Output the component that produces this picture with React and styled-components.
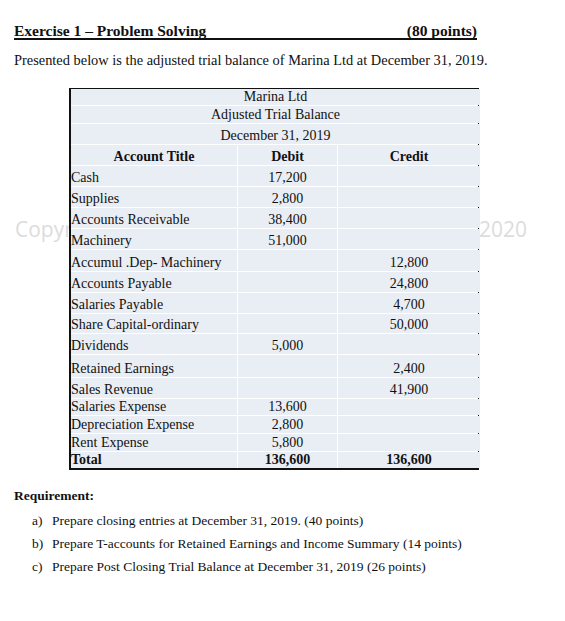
import React from "react";
import styled, { createGlobalStyle } from "styled-components";

const Global = createGlobalStyle`
  html, body {
    margin: 0;
    background: #ffffff;
  }
  body {
    font-family: "Liberation Serif", "DejaVu Serif", serif;
    color: #111;
  }
`;

const Page = styled.div`
  width: 565px;
  height: 621px;
  padding: 23px 0 0 14px;
  box-sizing: border-box;
`;

const Heading = styled.div`
  display: flex;
  justify-content: space-between;
  width: 463px;
  font-size: 15.5px;
  font-weight: bold;
  line-height: 15px;
  border-bottom: 2px solid #111;
`;

const Intro = styled.p`
  margin: 11px 0 0;
  font-size: 14.4px;
  line-height: 18px;
`;

const TableArea = styled.div`
  position: relative;
  margin: 19px 0 0 55px;
  width: 410px;
`;

const Watermark = styled.div`
  position: absolute;
  left: -54px;
  right: -48px;
  top: 127px;
  display: flex;
  justify-content: space-between;
  font-family: "Open Sans", "Liberation Sans", sans-serif;
  font-size: 21px;
  color: #dcdcdc;
  z-index: 0;
`;

const Grid = styled.div`
  position: relative;
  z-index: 1;
  display: grid;
  grid-template-columns: 166px 99px 142px;
  column-gap: 1px;
  row-gap: 1px;
  background: #ffffff;
  border: 1px solid #111;
  border-left-width: 2px;
  border-bottom-width: 2px;
  font-size: 14px;
`;

const Cell = styled.div`
  background: #e9edf4;
  height: ${(p) => p.h}px;
  display: flex;
  align-items: flex-end;
  justify-content: ${(p) => (p.left ? "flex-start" : "center")};
  padding-bottom: 1px;
  box-sizing: border-box;
  line-height: 14px;
  font-weight: ${(p) => (p.bold ? "bold" : "normal")};
  grid-column: ${(p) => (p.span ? "1 / span 3" : "auto")};
  white-space: nowrap;
`;

const ReqTitle = styled.div`
  margin-top: 18px;
  font-size: 13.5px;
  font-weight: bold;
`;

const ReqList = styled.div`
  margin-top: 8px;
  padding-left: 18px;
  display: flex;
  flex-direction: column;
  gap: 5px;
`;

const ReqItem = styled.div`
  display: flex;
  font-size: 13.5px;
  line-height: 18px;
`;

const ReqMark = styled.span`
  width: 20px;
`;

const titles = [
  ["Marina Ltd", 16],
  ["Adjusted Trial Balance", 17],
  ["December 31, 2019", 20],
];

const rows = [
  ["Cash", "17,200", "", 20],
  ["Supplies", "2,800", "", 20],
  ["Accounts Receivable", "38,400", "", 20],
  ["Machinery", "51,000", "", 20],
  ["Accumul .Dep- Machinery", "", "12,800", 21],
  ["Accounts Payable", "", "24,800", 20],
  ["Salaries Payable", "", "4,700", 20],
  ["Share Capital-ordinary", "", "50,000", 19],
  ["Dividends", "5,000", "", 20],
  ["Retained Earnings", "", "2,400", 22],
  ["Sales Revenue", "", "41,900", 20],
  ["Salaries Expense", "13,600", "", 16],
  ["Depreciation Expense", "2,800", "", 17],
  ["Rent Expense", "5,800", "", 17],
];

const reqs = [
  ["a)", "Prepare closing entries at December 31, 2019. (40 points)"],
  ["b)", "Prepare T-accounts for Retained Earnings and Income Summary (14 points)"],
  ["c)", "Prepare Post Closing Trial Balance at December 31, 2019 (26 points)"],
];

export default function App() {
  return (
    <Page>
      <Global />
      <Heading>
        <span>Exercise 1 – Problem Solving</span>
        <span>(80 points)</span>
      </Heading>
      <Intro>
        Presented below is the adjusted trial balance of Marina Ltd at December 31, 2019.
      </Intro>
      <TableArea>
        <Watermark>
          <span>Copyright</span>
          <span>2020</span>
        </Watermark>
        <Grid>
          {titles.map(([t, h]) => (
            <Cell key={t} span h={h}>
              {t}
            </Cell>
          ))}
          <Cell bold h={20}>Account Title</Cell>
          <Cell bold h={20}>Debit</Cell>
          <Cell bold h={20}>Credit</Cell>
          {rows.map(([name, dr, cr, h]) => (
            <React.Fragment key={name}>
              <Cell left h={h}>{name}</Cell>
              <Cell h={h}>{dr}</Cell>
              <Cell h={h}>{cr}</Cell>
            </React.Fragment>
          ))}
          <Cell left bold h={16}>Total</Cell>
          <Cell bold h={16}>136,600</Cell>
          <Cell bold h={16}>136,600</Cell>
        </Grid>
      </TableArea>
      <ReqTitle>Requirement:</ReqTitle>
      <ReqList>
        {reqs.map(([m, t]) => (
          <ReqItem key={m}>
            <ReqMark>{m}</ReqMark>
            <span>{t}</span>
          </ReqItem>
        ))}
      </ReqList>
    </Page>
  );
}
